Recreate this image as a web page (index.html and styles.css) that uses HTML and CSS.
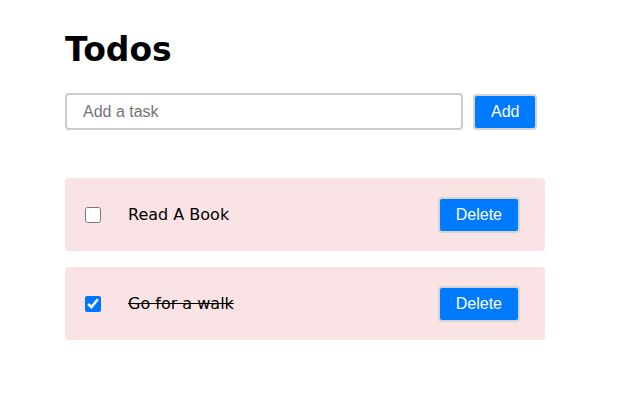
FILE: index.html
```html
<!DOCTYPE html>
<html lang="en">
<head>
    <meta charset="UTF-8">
    <meta name="viewport" content="width=device-width, initial-scale=1.0">
    <title>Todos</title>
    <link rel="stylesheet" href="styles.css">
</head>
<body>
    <div class="app">
        <h1>Todos</h1>

        <form class="todo-form">
            <input type="text" class="todo-input" placeholder="Add a task">
            <button type="submit" class="btn">Add</button>
        </form>

        <ul class="todo-list">
            <li class="todo-item">
                <input type="checkbox" class="todo-check">
                <span class="todo-text">Read A Book</span>
                <button class="btn">Delete</button>
            </li>
            <li class="todo-item done">
                <input type="checkbox" class="todo-check" checked>
                <span class="todo-text">Go for a walk</span>
                <button class="btn">Delete</button>
            </li>
        </ul>
    </div>
</body>
</html>
```

FILE: styles.css
```css
body {
    margin: 0;
    padding: 0;
    background-color: #fff;
    font-family: Verdana, 'DejaVu Sans', sans-serif;
    color: #000;
}

.app {
    width: 480px;
    margin-left: 65px;
    padding-top: 30px;
}

.app h1 {
    margin: 0 0 24px;
    font-size: 33px;
    font-weight: bold;
}

.todo-form {
    display: flex;
    align-items: center;
    gap: 10px;
    margin: 0;
}

.todo-input {
    width: 398px;
    height: 37px;
    box-sizing: border-box;
    padding: 0 16px;
    border: 2px solid #ccc;
    border-radius: 4px;
    font-family: 'Liberation Sans', Arial, sans-serif;
    font-size: 16px;
    outline: none;
}

.todo-input::placeholder {
    color: #757575;
}

.btn {
    height: 36px;
    box-sizing: border-box;
    padding: 0 16px;
    background-color: #007bff;
    color: white;
    border: 2px solid #d4d4d4;
    border-radius: 4px;
    font-family: 'Liberation Sans', Arial, sans-serif;
    font-size: 16px;
    cursor: pointer;
}

.todo-list {
    list-style-type: none;
    margin: 48px 0 0;
    padding: 0;
    display: flex;
    flex-direction: column;
    gap: 16px;
}

.todo-item {
    display: flex;
    align-items: center;
    height: 73px;
    box-sizing: border-box;
    padding: 0 25px 0 20px;
    background: #f9e3e4;
    border-radius: 4px;
}

.todo-check {
    width: 16px;
    height: 16px;
    margin: 0 27px 0 0;
}

.todo-text {
    flex: 1;
    font-size: 16px;
}

.todo-item.done .todo-text {
    text-decoration: line-through;
}
```
